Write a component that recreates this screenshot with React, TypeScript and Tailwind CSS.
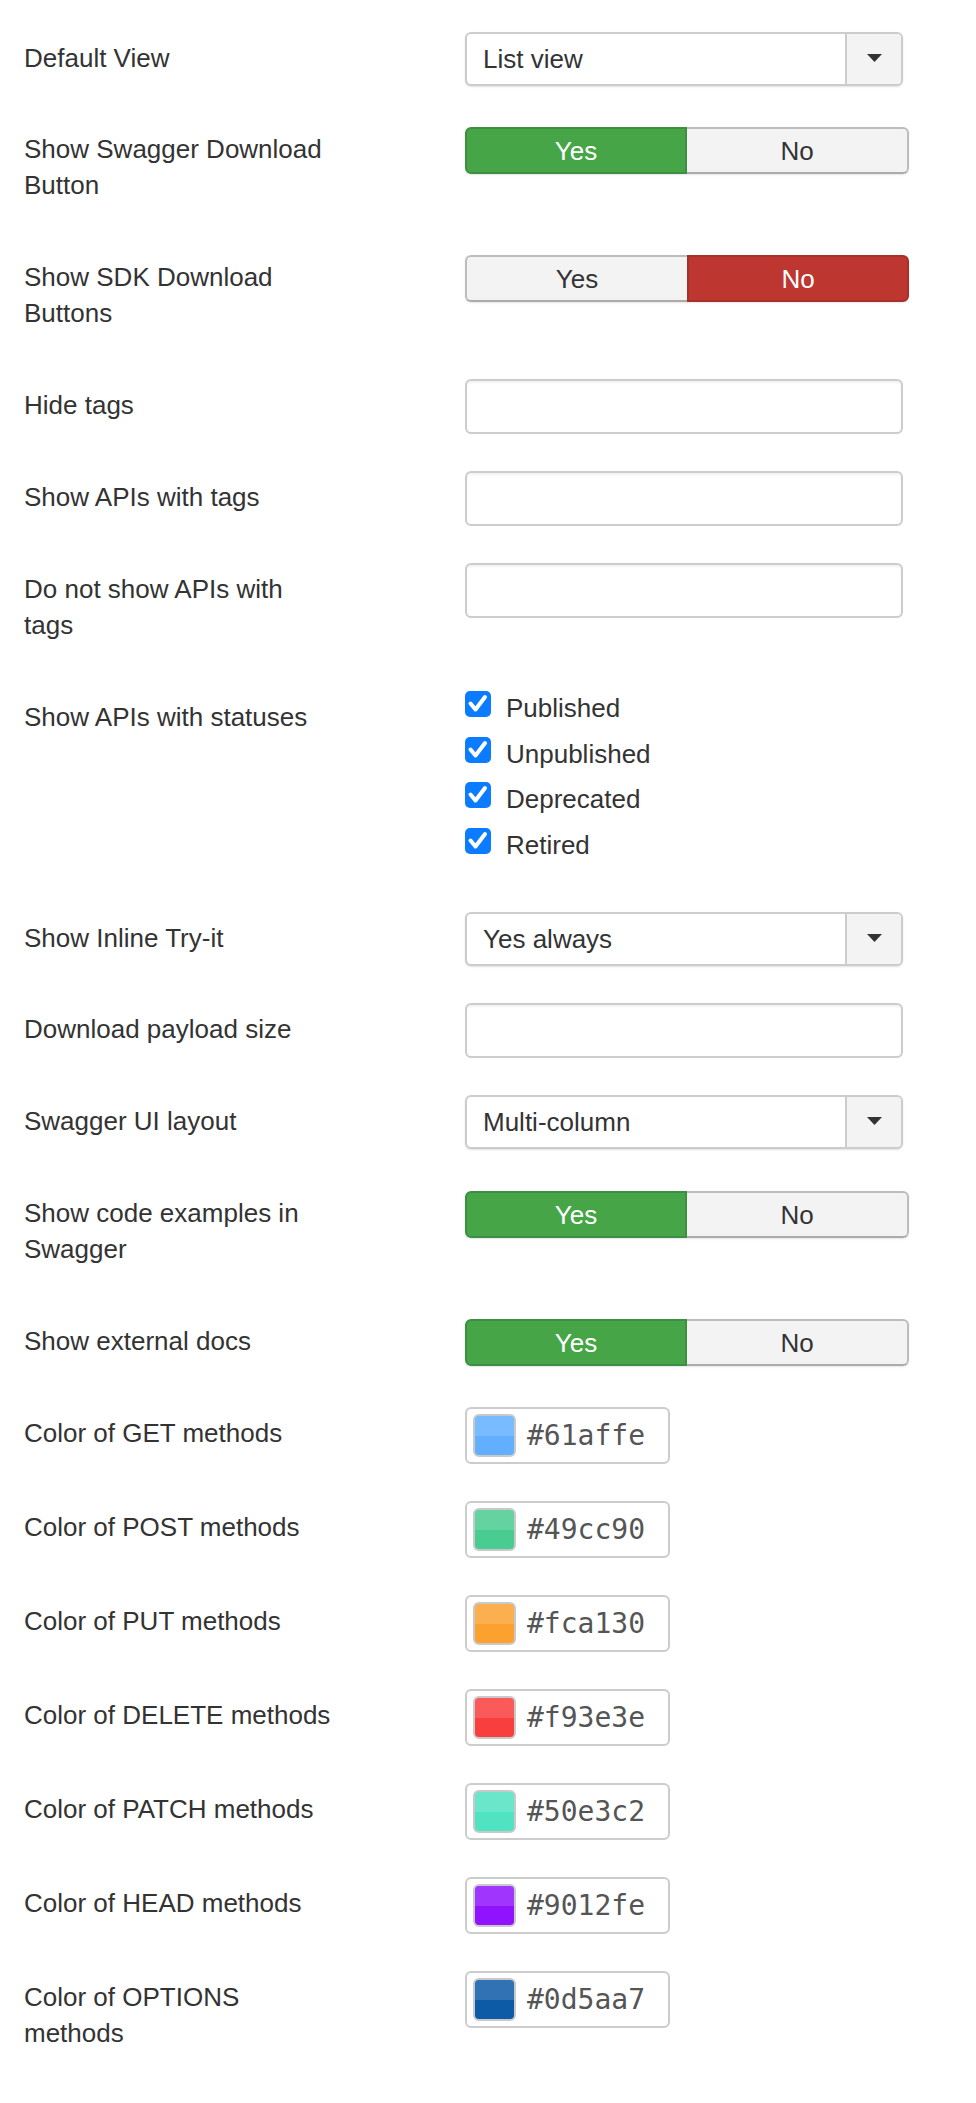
import React from "react";

type Opt = { label: string; node: React.ReactNode; h: string; pt: string };

function Label({ text, pt }: { text: string; pt: string }) {
  return (
    <div className={`w-[441px] flex-none ${pt}`}>
      <div className="max-w-[310px]">{text}</div>
    </div>
  );
}

function Caret() {
  return (
    <svg width="15" height="8" viewBox="0 0 15 8" className="mb-[3px]">
      <path d="M0 0 L15 0 L7.5 8 Z" fill="#333" />
    </svg>
  );
}

function Select({ value }: { value: string }) {
  return (
    <div className="flex w-[438px] h-[54px] border-2 border-[#cccccc] rounded-[6px] bg-white shadow-[0_1px_2px_rgba(0,0,0,0.12)]">
      <div className="flex-1 pl-[16px] flex items-center text-[#333]">{value}</div>
      <div className="w-[56px] border-l-2 border-[#cccccc] bg-[#f3f3f3] rounded-r-[4px] flex items-center justify-center">
        <Caret />
      </div>
    </div>
  );
}

function TextInput() {
  return (
    <div className="w-[438px] h-[55px] border-2 border-[#cccccc] rounded-[6px] bg-white shadow-[inset_0_2px_2px_rgba(0,0,0,0.05)]" />
  );
}

function Toggle({ yes }: { yes: boolean }) {
  return (
    <div className="flex w-[444px] h-[47px] shadow-[0_1px_2px_rgba(0,0,0,0.1)] rounded-[6px]">
      {yes ? (
        <>
          <div className="w-1/2 flex items-center justify-center rounded-l-[6px] border-2 border-[#3d8e40] bg-[#46a546] text-white">
            Yes
          </div>
          <div className="w-1/2 flex items-center justify-center rounded-r-[6px] border-2 border-l-0 border-[#bdbdbd] border-b-[#ababab] bg-[#f3f3f3] text-[#333]">
            No
          </div>
        </>
      ) : (
        <>
          <div className="w-1/2 flex items-center justify-center rounded-l-[6px] border-2 border-r-0 border-[#bdbdbd] border-b-[#ababab] bg-[#f3f3f3] text-[#333]">
            Yes
          </div>
          <div className="w-1/2 flex items-center justify-center rounded-r-[6px] border-2 border-[#a6302a] bg-[#bd362f] text-white">
            No
          </div>
        </>
      )}
    </div>
  );
}

function Check({ text }: { text: string }) {
  return (
    <div className="flex items-start h-[36px]">
      <span className="mt-[1px] w-[26px] h-[26px] flex-none rounded-[5px] bg-[#0b7cff] flex items-center justify-center">
        <svg width="26" height="26" viewBox="0 0 26 26">
          <path
            d="M5.5 12.5 L10.5 18.5 L20 6"
            stroke="white"
            strokeWidth="4"
            fill="none"
            strokeLinecap="round"
            strokeLinejoin="round"
          />
        </svg>
      </span>
      <span className="ml-[15px] text-[#333]">{text}</span>
    </div>
  );
}

function ColorField({ hex, bg }: { hex: string; bg: string }) {
  return (
    <div className="w-[205px] h-[57px] border-2 border-[#cccccc] rounded-[6px] bg-white flex items-center">
      <div className={`ml-[6px] w-[43px] h-[43px] flex-none rounded-[6px] border-2 border-[#c9c9c9] overflow-hidden flex flex-col ${bg}`}>
        <div className="h-1/2 bg-white/15" />
      </div>
      <span className="ml-[11px] font-['DejaVu_Sans_Mono',monospace] text-[28px] text-[#555] leading-none">
        {hex}
      </span>
    </div>
  );
}

const colors: { name: string; hex: string; bg: string }[] = [
  { name: "Color of GET methods", hex: "#61affe", bg: "bg-[#61affe]" },
  { name: "Color of POST methods", hex: "#49cc90", bg: "bg-[#49cc90]" },
  { name: "Color of PUT methods", hex: "#fca130", bg: "bg-[#fca130]" },
  { name: "Color of DELETE methods", hex: "#f93e3e", bg: "bg-[#f93e3e]" },
  { name: "Color of PATCH methods", hex: "#50e3c2", bg: "bg-[#50e3c2]" },
  { name: "Color of HEAD methods", hex: "#9012fe", bg: "bg-[#9012fe]" },
  { name: "Color of OPTIONS methods", hex: "#0d5aa7", bg: "bg-[#0d5aa7]" },
];

export default function App() {
  const rows: Opt[] = [
    { label: "Default View", node: <Select value="List view" />, h: "h-[95px]", pt: "pt-[8px]" },
    { label: "Show Swagger Download Button", node: <Toggle yes />, h: "h-[128px]", pt: "pt-[4px]" },
    { label: "Show SDK Download Buttons", node: <Toggle yes={false} />, h: "h-[124px]", pt: "pt-[4px]" },
    { label: "Hide tags", node: <TextInput />, h: "h-[92px]", pt: "pt-[8px]" },
    { label: "Show APIs with tags", node: <TextInput />, h: "h-[92px]", pt: "pt-[8px]" },
    { label: "Do not show APIs with tags", node: <TextInput />, h: "h-[127px]", pt: "pt-[8px]" },
    {
      label: "Show APIs with statuses",
      node: (
        <div className="flex flex-col gap-[9.5px]">
          <Check text="Published" />
          <Check text="Unpublished" />
          <Check text="Deprecated" />
          <Check text="Retired" />
        </div>
      ),
      h: "h-[222px]",
      pt: "pt-[9px]",
    },
    { label: "Show Inline Try-it", node: <Select value="Yes always" />, h: "h-[91px]", pt: "pt-[8px]" },
    { label: "Download payload size", node: <TextInput />, h: "h-[92px]", pt: "pt-[8px]" },
    { label: "Swagger UI layout", node: <Select value="Multi-column" />, h: "h-[96px]", pt: "pt-[8px]" },
    { label: "Show code examples in Swagger", node: <Toggle yes />, h: "h-[128px]", pt: "pt-[4px]" },
    { label: "Show external docs", node: <Toggle yes />, h: "h-[88px]", pt: "pt-[4px]" },
  ];

  return (
    <div className="w-[976px] min-h-[2103px] bg-white pt-[32px] pl-[24px] font-['Liberation_Sans',Arial,sans-serif] text-[26px] leading-[36px] text-[#333]">
      {rows.map((r) => (
        <div key={r.label} className={`flex items-start ${r.h}`}>
          <Label text={r.label} pt={r.pt} />
          <div>{r.node}</div>
        </div>
      ))}
      {colors.map((c) => (
        <div key={c.name} className="flex items-start h-[94px]">
          <Label text={c.name} pt="pt-[8px]" />
          <ColorField hex={c.hex} bg={c.bg} />
        </div>
      ))}
    </div>
  );
}
